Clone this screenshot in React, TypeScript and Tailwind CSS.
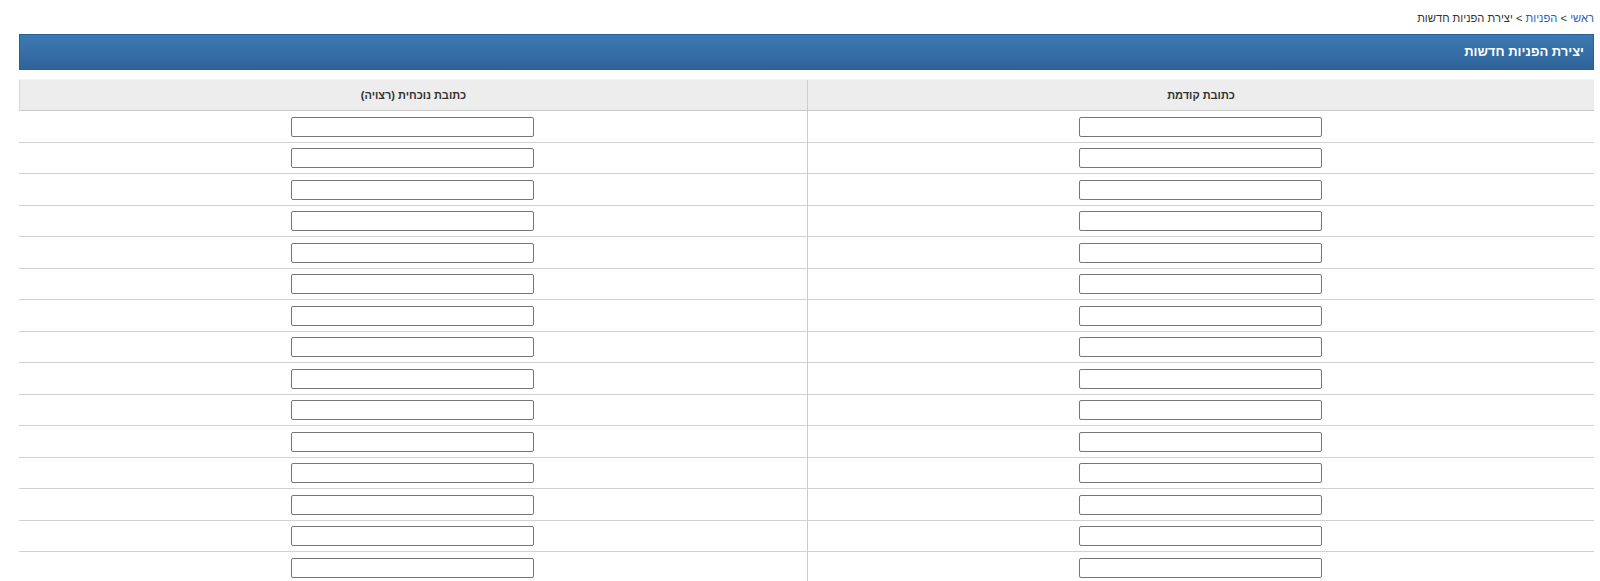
import React from "react";

const rows = Array.from({ length: 15 }, (_, i) => i);

export default function App() {
  return (
    <div
      dir="rtl"
      className="w-[1600px] h-[581px] overflow-hidden bg-white pr-[6px] pl-[19px] pt-[10px]"
      style={{ fontFamily: '"Liberation Sans", Arial, "DejaVu Sans", sans-serif' }}
    >
      <div className="h-[16px] leading-[16px] text-[11.2px] text-[#333]">
        <a className="text-[#2a63b8]">ראשי</a>
        <span> &gt; </span>
        <a className="text-[#2a63b8]">הפניות</a>
        <span> &gt; </span>
        <span>יצירת הפניות חדשות</span>
      </div>
      <div className="mt-[8px] h-[36px] flex items-center pr-[9px] border border-[#2b5d90] bg-gradient-to-b from-[#3d7ab2] to-[#2e6399] text-white text-[13px] font-bold">
        יצירת הפניות חדשות
      </div>
      <div className="mt-[9px]">
        <div className="grid grid-cols-2 h-[32px] bg-[#ededed] border-b border-[#c8c8c8] border-l border-l-[#d8d8d8] border-t border-t-[#f4f4f4]">
          <div className="flex items-center justify-center border-l border-[#cccccc] text-[11px] font-bold text-[#333]">
            כתובת קודמת
          </div>
          <div className="flex items-center justify-center text-[11px] font-bold text-[#333]">
            כתובת נוכחית (רצויה)
          </div>
        </div>
        {rows.map((r) => (
          <div key={r} className="grid grid-cols-2 h-[31.5px] border-b border-[#d2d2d2]">
            <div className="flex justify-center pt-[5.5px] border-l border-[#cccccc]">
              <input
                type="text"
                className="w-[243px] h-[20px] border border-[#767676] rounded-[2px] bg-white outline-none"
              />
            </div>
            <div className="flex justify-center pt-[5.5px]">
              <input
                type="text"
                className="w-[243px] h-[20px] border border-[#767676] rounded-[2px] bg-white outline-none"
              />
            </div>
          </div>
        ))}
      </div>
    </div>
  );
}
